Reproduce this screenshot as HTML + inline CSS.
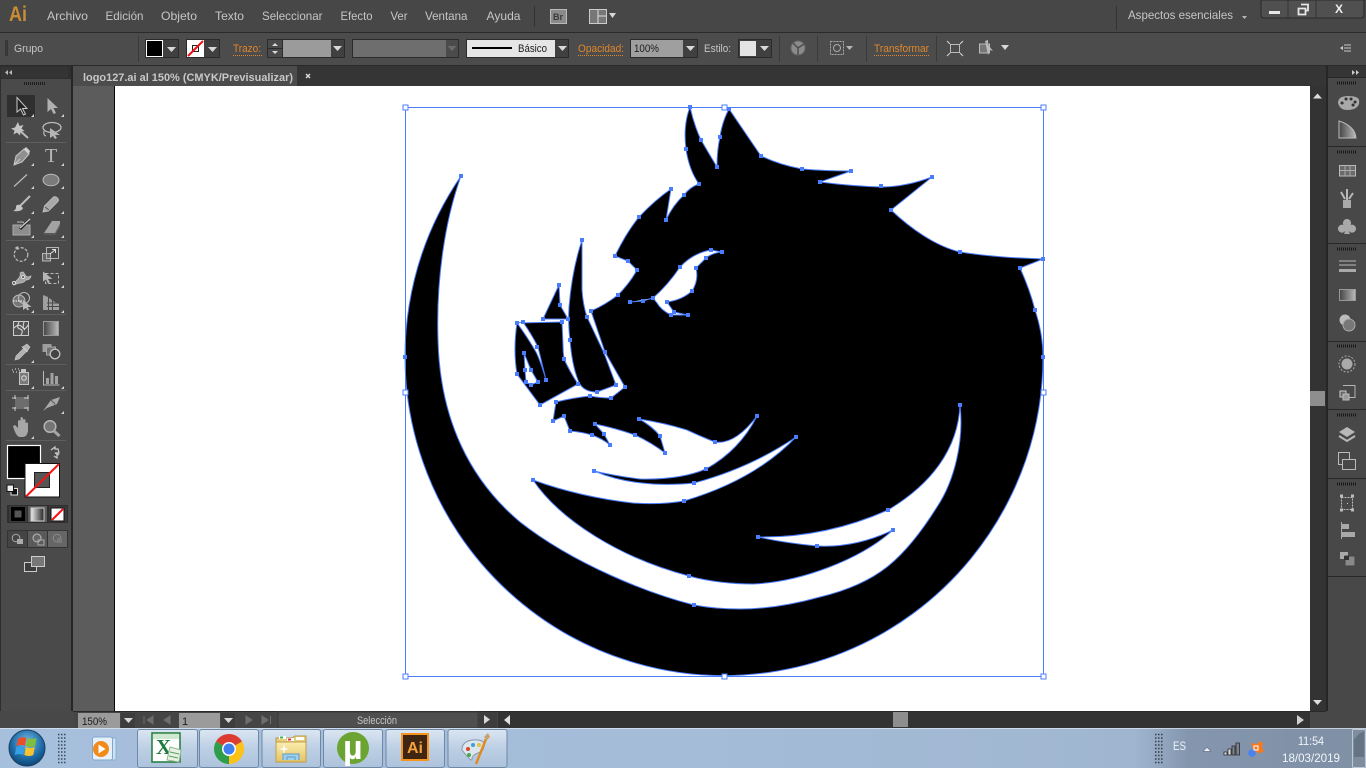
<!DOCTYPE html>
<html lang="es"><head><meta charset="utf-8"><title>Illustrator</title>
<style>html,body{margin:0;padding:0;background:#484848;overflow:hidden}svg{display:block}
text{font-family:"Liberation Sans",sans-serif;font-size:11px;fill:#c6c6c6}
.o{fill:#e0872d}.d{fill:#1c1c1c}
.g{fill:#b5b5b5}.l{fill:none;stroke:#b5b5b5;stroke-width:1.2}
.m{fill:#7c7c7c;stroke:#bcbcbc;stroke-width:1}
.t{fill:#d0d0d0}
.b{fill:#3c3c3c;stroke:#2a2a2a}
.w{fill:#d8d8d8}
</style></head><body>
<svg xmlns="http://www.w3.org/2000/svg" width="1366" height="768" viewBox="0 0 1366 768">
<defs>
<linearGradient id="tb" x1="0" x2="1" y1="0" y2="0"><stop offset="0" stop-color="#a6bfdc"/><stop offset=".5" stop-color="#a4bcd8"/><stop offset=".83" stop-color="#a0b6d0"/><stop offset=".87" stop-color="#8496ae"/><stop offset="1" stop-color="#7f8fa4"/></linearGradient>
<linearGradient id="btn" x1="0" x2="0" y1="0" y2="1"><stop offset="0" stop-color="#dbe6f2"/><stop offset=".5" stop-color="#bccfe4"/><stop offset="1" stop-color="#adc3dc"/></linearGradient>
<linearGradient id="gr" x1="0" x2="1" y1="0" y2="0"><stop offset="0" stop-color="#444"/><stop offset="1" stop-color="#bbb"/></linearGradient>
<linearGradient id="gw" x1="0" x2="1" y1="0" y2="0"><stop offset="0" stop-color="#eee"/><stop offset="1" stop-color="#222"/></linearGradient>
<radialGradient id="orb" cx=".5" cy=".35" r=".7"><stop offset="0" stop-color="#7fc0e8"/><stop offset=".6" stop-color="#1d6ca8"/><stop offset="1" stop-color="#0c3c68"/></radialGradient>
<linearGradient id="fold" x1="0" x2="0" y1="0" y2="1"><stop offset="0" stop-color="#fbeeb0"/><stop offset="1" stop-color="#e3c264"/></linearGradient>
</defs>

<!-- base -->
<rect width="1366" height="768" fill="#484848"/>
<!-- menu bar -->
<rect width="1366" height="32" fill="#474747"/>
<rect y="32" width="1366" height="1" fill="#2a2a2a"/>
<text x="9" y="21" textLength="18" lengthAdjust="spacingAndGlyphs" style="font-size:21px;font-weight:bold;fill:#c98d35">Ai</text>
<g style="font-size:12px">
<text x="47" y="20" textLength="41" lengthAdjust="spacingAndGlyphs" style="font-size:12px">Archivo</text>
<text x="105.500" y="20" textLength="38" lengthAdjust="spacingAndGlyphs" style="font-size:12px">Edición</text>
<text x="161" y="20" textLength="36" lengthAdjust="spacingAndGlyphs" style="font-size:12px">Objeto</text>
<text x="215" y="20" textLength="29" lengthAdjust="spacingAndGlyphs" style="font-size:12px">Texto</text>
<text x="262" y="20" textLength="60.500" lengthAdjust="spacingAndGlyphs" style="font-size:12px">Seleccionar</text>
<text x="340.500" y="20" textLength="32" lengthAdjust="spacingAndGlyphs" style="font-size:12px">Efecto</text>
<text x="390.500" y="20" textLength="17" lengthAdjust="spacingAndGlyphs" style="font-size:12px">Ver</text>
<text x="425" y="20" textLength="42.500" lengthAdjust="spacingAndGlyphs" style="font-size:12px">Ventana</text>
<text x="486.500" y="20" textLength="34" lengthAdjust="spacingAndGlyphs" style="font-size:12px">Ayuda</text>
</g>
<rect x="534" y="6" width="1" height="21" fill="#333"/>
<rect x="550.5" y="9.5" width="16" height="14" fill="#8a8a8a" stroke="#bbb"/><text x="553" y="20" style="font-size:9px;font-weight:bold;fill:#3a3a3a">Br</text>
<rect x="589.5" y="9.5" width="17" height="14" fill="#777" stroke="#ccc"/><path d="M598 10v13M598 16h8" stroke="#ddd" fill="none"/><path d="M609 13h7l-3.500 5z" class="w"/>
<rect x="1116" y="6" width="1" height="24" fill="#333"/>
<text x="1128" y="19" textLength="105" lengthAdjust="spacingAndGlyphs" style="font-size:12px">Aspectos esenciales</text><path d="M1242 16h5l-2.500 3z" class="g"/>
<!-- window buttons -->
<path d="M1261 0h103v15q0 3-3 3h-97q-3 0-3-3z" fill="#505050" stroke="#2a2a2a"/>
<path d="M1288 0v18M1316 0v18" stroke="#333"/>
<rect x="1269" y="11" width="11" height="3" fill="#e6e6e6"/>
<path d="M1298.500 8.500h7v6h-7zM1301 4.500h7v6h-2" fill="none" stroke="#e6e6e6" stroke-width="1.800"/>
<text x="1335" y="13" style="font-size:12px;font-weight:bold;fill:#eee">X</text>

<!-- control bar -->
<rect y="33" width="1366" height="32" fill="#4c4c4c"/>
<rect y="65" width="1366" height="1" fill="#2a2a2a"/>
<path d="M5 41h3M5 43h3M5 45h3M5 47h3M5 49h3M5 51h3M5 53h3M5 55h3" stroke="#222" fill="none"/>
<text x="14" y="52" textLength="29" lengthAdjust="spacingAndGlyphs">Grupo</text>
<rect x="138" y="36" width="1" height="26" fill="#3a3a3a"/>
<!-- fill swatch -->
<rect x="145.500" y="39.500" width="33" height="18" fill="#404040" stroke="#2b2b2b"/>
<rect x="146.500" y="40.500" width="16" height="16" fill="#000" stroke="#fff"/>
<path d="M167 47h9l-4.500 5z" class="w"/>
<rect x="186.500" y="39.500" width="33" height="18" fill="#404040" stroke="#2b2b2b"/>
<rect x="187" y="40" width="17" height="17" fill="#fff"/><rect x="192.500" y="45.500" width="6" height="6" fill="none" stroke="#222"/><path d="M188 56L203 41" stroke="#f01212" stroke-width="2"/>
<path d="M208 47h9l-4.500 5z" class="w"/>
<text x="233" y="52" class="o" textLength="28" lengthAdjust="spacingAndGlyphs">Trazo:</text><path d="M233 55.500h29" stroke="#e0872d" stroke-dasharray="1 1"/>
<rect x="267.500" y="39.500" width="77" height="18" fill="#9b9b9b" stroke="#2b2b2b"/>
<rect x="268" y="40" width="14" height="17" fill="#4a4a4a"/><path d="M268 48.500h14M282.500 40v17" stroke="#2b2b2b"/><path d="M272 46l3-3 3 3zM272 51l3 3 3-3z" class="w"/>
<rect x="331" y="40" width="13" height="17" fill="#404040"/><path d="M333 46h9l-4.500 5z" class="w"/>
<rect x="352.500" y="39.500" width="106" height="18" fill="#6e6e6e" stroke="#2b2b2b"/>
<rect x="446" y="40" width="12" height="17" fill="#4b4b4b"/><path d="M447.500 46h9l-4.500 5z" fill="#6b6b6b"/>
<rect x="466.500" y="39.500" width="102" height="18" fill="#404040" stroke="#2b2b2b"/>
<rect x="467" y="40" width="88" height="17" fill="#e6e6e6"/><rect x="472" y="47" width="40" height="2" fill="#000"/><text x="518" y="52" class="d" textLength="29" lengthAdjust="spacingAndGlyphs">Básico</text>
<path d="M558 46h9l-4.500 5z" class="w"/>
<text x="578" y="52" class="o" textLength="46" lengthAdjust="spacingAndGlyphs">Opacidad:</text><path d="M578 55.500h46" stroke="#e0872d" stroke-dasharray="1 1"/>
<rect x="630.500" y="39.500" width="67" height="18" fill="#9f9f9f" stroke="#2b2b2b"/><text x="634" y="52" class="d" textLength="25" lengthAdjust="spacingAndGlyphs">100%</text>
<rect x="683" y="40" width="14" height="17" fill="#404040"/><path d="M686 46h9l-4.500 5z" class="w"/>
<text x="704" y="52" textLength="27" lengthAdjust="spacingAndGlyphs">Estilo:</text>
<rect x="738.500" y="39.500" width="33" height="18" fill="#404040" stroke="#2b2b2b"/><rect x="740" y="41" width="16" height="15" fill="#e4e4e4"/><path d="M760 46h9l-4.500 5z" class="w"/>
<path d="M779.500 36v26M817.500 36v26M866.500 36v26M936.500 36v26" stroke="#3a3a3a"/>
<circle cx="798" cy="48" r="7" fill="#8b8b8b" stroke="#6a6a6a"/><path d="M798 48L793 43M798 48l6-4M798 48v7" stroke="#4e4e4e" stroke-width="1.500"/>
<rect x="830.500" y="41.500" width="13" height="13" fill="none" stroke="#aaa" stroke-dasharray="2 1"/><circle cx="837" cy="48" r="3.500" fill="none" stroke="#aaa"/><path d="M846 46h7l-3.500 4z" class="g"/>
<text x="874" y="52" class="o" textLength="55" lengthAdjust="spacingAndGlyphs">Transformar</text><path d="M874 55.500h55" stroke="#e0872d" stroke-dasharray="1 1"/>
<rect x="950.500" y="44.500" width="9" height="8" fill="none" stroke="#bbb"/><path d="M947 41l3 3M963 41l-3 3M947 56l3-3M963 56l-3-3" stroke="#ccc" stroke-width="1.200"/>
<rect x="979.500" y="44" width="10" height="9" fill="#777" stroke="#bbb"/><path d="M985 41l3-1v4M985 41l8 10-3-1-2 5z" fill="#bbb"/><path d="M1001 45h8l-4 5z" class="w"/>
<path d="M1344 45h7M1344 48h7M1344 51h7" stroke="#c8c8c8"/><path d="M1340 48l3-2v4z" class="t"/>

<!-- tab row -->
<rect y="66" width="1366" height="20" fill="#353535"/>
<rect x="69" y="66" width="228" height="20" fill="#4c4c4c"/>
<path d="M68.500 66v20" stroke="#2a2a2a"/>
<text x="83" y="81" textLength="210" lengthAdjust="spacingAndGlyphs" style="font-weight:bold;fill:#c8c8c8;font-size:11px">logo127.ai al 150% (CMYK/Previsualizar)</text>
<path d="M306 74l4 4M310 74l-4 4" stroke="#ddd" stroke-width="1.400"/>

<!-- left panel -->
<rect x="0" y="66" width="72" height="646" fill="#2f2f2f"/>
<rect x="1" y="67" width="67" height="11" fill="#343434"/>
<rect x="1" y="79" width="70" height="634" fill="#4a4a4a"/>
<rect x="71" y="66" width="2" height="646" fill="#262626"/>
<path d="M8 70v5l-3-2.500zM12 70v5l-3-2.500z" fill="#bbb"/>
<path d="M24 83.500h1M26 83.500h1M28 83.500h1M30 83.500h1M32 83.500h1M34 83.500h1M36 83.500h1M38 83.500h1M40 83.500h1M42 83.500h1M44 83.500h1" stroke="#1e1e1e" stroke-width="3"/>

<!-- pasteboard + artboard -->
<rect x="73" y="86" width="42" height="626" fill="#5c5c5c"/>
<rect x="114" y="86" width="2" height="626" fill="#000" opacity=".95"/>
<rect x="115" y="86" width="1195" height="626" fill="#fff"/>

<!-- logo -->
<path fill-rule="evenodd" fill="#000" stroke="#4a7dfc" stroke-width="1" d="M461,176A319,319 0 1 0 1043,357C1043,340 1040,325 1035,310Q1030,290 1020,268L1043,259C1010,258 985,256 960,252C935,246 910,228 891,210L932,177Q905,187 881,187Q850,186 820,182L851,171Q825,171 802,169Q780,165 761,156L729,109Q722,122 720,137Q717,150 717,167Q708,152 701,140Q694,125 690,107Q683,125 686,149Q689,170 699,184Q690,187 684,195Q673,205 666,220L671,189Q655,200 639,217Q626,233 615,256L628,261L637,270Q630,283 618,295Q605,305 591,311L605,352L625,387L611,398Q600,398 590,396Q572,398 556,402L553,421L564,416L570,431Q582,432 592,435Q603,439 610,445L604,434L595,424Q615,428 635,435Q652,443 665,453L660,436Q652,426 639,419Q665,423 687,430Q702,437 715,442Q735,445 757,416Q740,450 706,469Q680,480 640,479Q615,476 594,471Q620,482 653,484Q675,485 694,483Q750,468 796,437Q755,480 684,501Q660,505 633,503Q580,497 533,480C560,520 620,558 689,576C710,582 735,584 753,584C800,582 860,560 893,530Q855,548 817,546Q785,543 758,537Q825,538 888,510C930,485 958,450 960,405C964,440 955,480 937,507C922,531 906,552 887,567C868,582 845,591 820,597C795,604 768,609 740,609Q715,609 694,605C650,594 575,565 520,522C470,480 440,420 438,340C436,280 445,220 461,176Z"/>
<!-- eye -->
<path fill="#fff" stroke="#4a7dfc" d="M630,302L643,301L653,298Q668,285 680,267Q693,253 711,250L722,252Q712,253 706,258L696,268Q699,280 692,291Q682,300 667,302L674,312L688,315L671,315Q661,310 657,303L653,298"/>
<!-- tusk -->
<path fill="#000" stroke="#4a7dfc" d="M582,240Q572,270 569,307Q568,325 570,340Q572,365 578,380Q582,392 597,392L616,385L604,353L587,317Q583,305 582,290Z"/>
<!-- triangle -->
<path fill="#000" stroke="#4a7dfc" d="M559,285L543,319H568L560,305Z"/>
<!-- snout -->
<path fill="#000" stroke="#4a7dfc" d="M517,323L562,322L563,345Q563,352 564,359Q570,372 578,384L540,405L517,374Q513,350 517,323Z"/>
<path fill="#fff" stroke="#4a7dfc" d="M517,323L523,322Q532,335 538,347L546,380Q541,362 536,352Q528,338 517,323Z"/>
<path fill="#fff" stroke="#4a7dfc" d="M524,353L525,370L526,382L531,385L538,382L531,370Z"/>
<!-- bbox -->
<rect x="405.500" y="107.500" width="638" height="569" fill="none" stroke="#4a7dfc"/>
<g fill="#fff" stroke="#4a7dfc"><rect x="403" y="105" width="5" height="5"/><rect x="722" y="105" width="5" height="5"/><rect x="1041" y="105" width="5" height="5"/><rect x="403" y="390" width="5" height="5"/><rect x="1041" y="390" width="5" height="5"/><rect x="403" y="674" width="5" height="5"/><rect x="722" y="674" width="5" height="5"/><rect x="1041" y="674" width="5" height="5"/></g>
<!-- anchors -->
<path fill="none" stroke="#4a7dfc" stroke-width="4" stroke-linecap="square" d="M461,176h0M405,357h0M1043,357h0M1035,310h0M1020,268h0M1043,259h0M960,252h0M891,210h0M932,177h0M881,186h0M820,182h0M851,171h0M802,169h0M761,156h0M729,109h0M720,137h0M717,167h0M701,140h0M690,107h0M686,149h0M699,184h0M684,195h0M666,220h0M671,189h0M639,217h0M615,256h0M628,261h0M637,270h0M618,295h0M591,311h0M605,352h0M625,387h0M611,398h0M590,396h0M556,402h0M553,421h0M564,416h0M570,431h0M592,435h0M610,445h0M604,434h0M595,424h0M635,435h0M665,453h0M660,436h0M639,419h0M715,442h0M757,416h0M706,469h0M594,471h0M694,483h0M796,437h0M684,501h0M533,480h0M689,576h0M893,530h0M817,546h0M758,537h0M888,510h0M960,405h0M694,605h0M630,302h0M643,301h0M653,298h0M680,267h0M711,250h0M722,252h0M706,258h0M696,268h0M692,291h0M667,302h0M674,312h0M688,315h0M671,315h0M582,240h0M587,317h0M597,392h0M616,385h0M578,384h0M570,340h0M568,319h0M559,285h0M543,319h0M560,305h0M517,323h0M523,322h0M562,322h0M564,359h0M540,405h0M517,374h0M537,347h0M546,380h0M524,353h0M525,370h0M526,382h0M531,385h0M538,382h0M531,370h0"/>

<!-- tool panel -->
<rect x="7" y="95" width="28" height="22" fill="#2f2f2f"/>
<path d="M6 142.500h60M6 240.500h60M6 314.500h60M6 364.500h60M6 390.500h60M6 440.500h60" stroke="#5e5e5e"/>
<!-- selection -->
<path d="M17 97.500V112l3.500-3 3 6 2-1-3-5.500h4.500z" fill="#222" stroke="#c9c9c9"/>
<path d="M47.500 98V112l3.500-3 2.500 5 2.500-1-2.500-5H58z" fill="#b0b0b0"/>
<!-- wand -->
<path d="M18 129l10 9" stroke="#bbb" stroke-width="2"/><path d="M18 122l1.500 4 4-1-2 3.500 3 2.500-4 .5-.5 4-3-3-3.500 2 1-4-3.500-2 4-1z" fill="#c4c4c4"/>
<!-- lasso -->
<ellipse cx="52" cy="127.500" rx="9" ry="5" fill="none" stroke="#bbb" stroke-width="1.300"/><path d="M44 131q-1 4 2 5" class="l"/><path d="M50 128v10l3-2 2 3 2-1-2-3h5z" fill="#b5b5b5"/>
<!-- pen -->
<path d="M14 165l2-9 8-7 5 5-7 8zM14 165l6-6" fill="#8f8f8f" stroke="#c8c8c8"/><path d="M24 149l2-2 4 4-1 3z" fill="#d0d0d0"/>
<text x="45" y="162" style="font-family:'Liberation Serif',serif;font-size:20px;fill:#b8b8b8">T</text>
<!-- line -->
<path d="M14 186.500L27 174.500" stroke="#bbb" stroke-width="1.200"/>
<ellipse cx="51" cy="180" rx="8" ry="5.800" fill="#7b7b7b" stroke="#bbb"/>
<!-- brush -->
<path d="M20 206L30 196" stroke="#bbb" stroke-width="2"/><path d="M13 211q3-1 3-4t4-2l3 3q-1 4-10 3z" fill="#c4c4c4"/>
<!-- pencil -->
<path d="M43 212l1.500-6 9-9q2-1 4 1t0 4l-9 9z" fill="#a9a9a9" stroke="#c4c4c4" stroke-width=".800"/><path d="M45 207l4 3" stroke="#555"/>
<!-- blob -->
<path d="M13 225h17v10H13z" fill="#8d8d8d" stroke="#ababab"/><path d="M17 222h6l2 3" fill="none" stroke="#bbb"/><path d="M20 229l9-9" stroke="#222" stroke-width="3"/><path d="M20 228l10-9" stroke="#c8c8c8" stroke-width="1.500"/>
<!-- eraser -->
<path d="M44 233l6-9h10l-5 9zM50 224h10v-3H52z" fill="#a3a3a3"/><path d="M44 234h11l5-8" fill="none" stroke="#666"/>
<!-- rotate -->
<circle cx="21" cy="254.500" r="6.800" fill="none" stroke="#b5b5b5" stroke-width="1.300" stroke-dasharray="3 1.500"/><path d="M18 246l-3.500 2 4 2z" fill="#bbb"/>
<!-- scale -->
<rect x="42.500" y="253.500" width="8" height="7.500" fill="#666" stroke="#b5b5b5"/><rect x="46.500" y="247.500" width="12" height="11" fill="none" stroke="#b5b5b5"/><path d="M50 254l5-4M52 249.500h3.500v3.500" stroke="#ddd" fill="none"/>
<!-- warp -->
<path d="M14 285q1-3 4-6t2-6q3-2 4 0t3 4q2 0 4-1-1 4-5 4l-2 2-3 1q-3 0-7 2z" fill="#a2a2a2" stroke="#c8c8c8" stroke-width=".700"/><circle cx="14" cy="283" r="1.500" fill="#444" stroke="#ddd"/><circle cx="23" cy="277" r="1.500" fill="#444" stroke="#ddd"/>
<!-- free transform -->
<rect x="45.500" y="273.500" width="13" height="10" fill="none" stroke="#bbb" stroke-dasharray="3 2"/><path d="M43 271.500v10l3-2 2 4 2-1-2-3.500h4.500z" fill="#b5b5b5"/>
<!-- shape builder -->
<circle cx="19" cy="301" r="6" fill="#757575" stroke="#bbb"/><circle cx="24" cy="298" r="5.500" fill="none" stroke="#bbb"/><path d="M13 301h9" stroke="#fff" stroke-dasharray="1.500 1"/><path d="M23 300v10l3-2 1.500 2.500 1.500-1-1.500-2.500h4z" fill="#bbb"/>
<!-- perspective -->
<path d="M43 295l5 2v13h-5zM49 298l3 2v10h-3zM53 301l6 3v6h-6z" fill="#9f9f9f"/><path d="M47 303h12M47 306.500h12" stroke="#4a4a4a"/>
<!-- mesh -->
<rect x="13.500" y="321.500" width="15" height="14" fill="#555" stroke="#ccc"/><path d="M14 328q5-5 8-1t6-2M19 322q-3 6 1 7t1 6M24 322q-2 6 1 8" fill="none" stroke="#ddd"/>
<!-- gradient -->
<rect x="43.500" y="321.500" width="15" height="14" fill="url(#gr)" stroke="#999"/>
<!-- eyedropper -->
<path d="M15 360l1-4 8-8 3 3-8 8zM24 346l3-2 3 3-2 3-1 2-5-5z" fill="#b2b2b2" stroke="#ccc" stroke-width=".600"/>
<!-- blend -->
<rect x="42.500" y="344" width="9" height="8" fill="#9c9c9c"/><rect x="46.500" y="347" width="9" height="8" fill="#6f6f6f" stroke="#a8a8a8"/><circle cx="55" cy="354" r="4.800" fill="#444" stroke="#c0c0c0" stroke-width="1.300"/>
<!-- sprayer -->
<rect x="19.500" y="372.500" width="9" height="12" fill="#7a7a7a" stroke="#c4c4c4"/><circle cx="24" cy="378" r="2.300" fill="none" stroke="#ddd"/><path d="M12 370h1M15 369h1M18 369h1M13 372h1M16 372h1M19 371h1" stroke="#ccc" stroke-width="1.300"/><rect x="21" y="369" width="5" height="3" fill="#c4c4c4"/>
<!-- graph -->
<path d="M43.500 371v14h16" fill="none" stroke="#bbb"/><path d="M46 378h3v6h-3zM50.500 373h3v11h-3zM55 376h3v8h-3z" fill="#a2a2a2"/>
<!-- artboard -->
<rect x="15" y="397" width="14" height="12" fill="#6d6d6d"/><path d="M12 398h19M12 408h19M15 395v16M28 395v16" stroke="#c9c9c9" stroke-dasharray="4 8"/>
<!-- slice -->
<path d="M43 411l8-11 9-3-3 7-10 4z" fill="#a9a9a9"/><path d="M51 400l4 4" stroke="#555"/>
<!-- hand -->
<path d="M13 426l2-1 3 3v-7q1-2 2.500 0v-3q1-2 2.500 0v2q1-2 2.500 0v3q1-1 2.500 0v8q-1 6-5 6h-3q-4 0-7-11z" fill="#a6a6a6"/>
<!-- zoom -->
<circle cx="50" cy="426.500" r="5.800" fill="#757575" stroke="#b5b5b5" stroke-width="1.500"/><path d="M54 431l5.500 5" stroke="#a5a5a5" stroke-width="3"/>
<!-- flyout corners -->
<path d="M34 114v3h-3zM64 114v3h-3zM34 163v3h-3zM64 163v3h-3zM34 186v3h-3zM64 186v3h-3zM34 211v3h-3zM64 211v3h-3zM34 235v3h-3zM64 235v3h-3zM34 262v3h-3zM64 262v3h-3zM34 285v3h-3zM64 285v3h-3zM34 310v3h-3zM64 310v3h-3zM34 360v3h-3zM34 386v3h-3zM64 386v3h-3zM64 411v3h-3zM34 436v3h-3z" fill="#d2d2d2"/>
<!-- fill stroke -->
<rect x="7.500" y="445.500" width="33" height="33" fill="#000" stroke="#fff" stroke-width="1.200"/>
<rect x="25" y="463.500" width="34.500" height="33.500" fill="#fff" stroke="#111"/>
<rect x="34.500" y="472.500" width="15" height="15" fill="#555" stroke="#222"/>
<path d="M26 496.500L59 464" stroke="#f21515" stroke-width="2"/>
<path d="M51 450l4-3v2h3l1 4h-4l4 2M57 453v5l-3-2" fill="none" stroke="#ccc" stroke-width="1.200"/>
<rect x="11" y="488.500" width="6.500" height="6.500" fill="#111" stroke="#ddd"/><rect x="7" y="485" width="6.500" height="6.500" fill="#eee" stroke="#111"/>
<!-- modes -->
<rect x="7" y="505" width="61" height="18" fill="#2f2f2f"/>
<rect x="9" y="506" width="18" height="16" fill="#3a3a3a"/><rect x="11" y="507" width="14" height="14" fill="#000"/><rect x="14.500" y="510.500" width="7" height="7" fill="#555"/>
<rect x="28" y="506" width="19" height="16" fill="#5d5d5d"/><rect x="31" y="508" width="13" height="13" fill="url(#gw)" stroke="#ccc"/>
<rect x="49" y="506" width="18" height="16" fill="#3a3a3a"/><rect x="51" y="508" width="13" height="13" fill="#fff" stroke="#111"/><path d="M52 520L63 509" stroke="#f21515" stroke-width="2"/>
<rect x="7" y="530" width="61" height="18" fill="#333"/>
<rect x="8" y="531" width="19" height="16" fill="#444"/><rect x="28" y="531" width="19" height="16" fill="#5a5a5a"/><rect x="48" y="531" width="19" height="16" fill="#666"/>
<circle cx="16" cy="538" r="3.800" fill="none" stroke="#aaa"/><rect x="17" y="539" width="6" height="5" fill="#aaa"/>
<circle cx="37" cy="538" r="4" fill="#666" stroke="#bbb"/><rect x="38" y="540" width="6" height="5" fill="none" stroke="#aaa"/>
<circle cx="57" cy="538" r="3.800" fill="none" stroke="#8a8a8a"/><path d="M57 538h5v5h-5z" fill="#7a7a7a"/>
<rect x="24.500" y="562.500" width="12" height="9" fill="#3d3d3d" stroke="#ccc"/><rect x="31.500" y="556.500" width="13" height="10" fill="#777" stroke="#ccc"/>

<!-- right scrollbar -->
<rect x="1310" y="86" width="16" height="626" fill="#333"/>
<rect x="1326" y="66" width="2" height="646" fill="#262626"/>
<path d="M1313 98.500l4.500-5 4.500 5z" fill="#ddd"/><path d="M1313 700l4.500 5 4.500-5z" fill="#ddd"/>
<rect x="1310" y="391" width="15" height="15" fill="#8e8e8e"/>
<!-- right panel -->
<rect x="1328" y="66" width="38" height="646" fill="#484848"/>
<rect x="1328" y="66" width="38" height="11" fill="#353535"/>
<path d="M1356 70v5l3-2.500zM1352 70v5l3-2.500z" fill="#ccc"/>
<path d="M1328 146.500h38M1328 243.500h38M1328 341.500h38M1328 409.500h38M1328 478.500h38M1328 576.500h38M1328 77.500h38" stroke="#282828"/>
<path d="M1337 83h19M1337 152h19M1337 249h19M1337 346h19M1337 415h19M1337 484h19" stroke="#181818" stroke-width="3" stroke-dasharray="1 1"/>
<!-- palette -->
<path d="M1338 103q0-7 10-7t11 4-2 7-10 3-9-7z" fill="#a9a9a9"/><path d="M1342 103h.100M1346 99h.100M1351 99h.100M1355 102h.100M1353 105h.100" stroke="#333" stroke-width="3" stroke-linecap="round"/>
<!-- guide -->
<path d="M1339 121v17h17q-1-12-17-17z" fill="url(#gr)" stroke="#bbb"/>
<!-- swatches -->
<rect x="1339.500" y="165.500" width="16" height="10.500" fill="#6a6a6a" stroke="#bbb"/><path d="M1345 165v11M1350 165v11M1340 170.500h15" stroke="#aaa"/>
<!-- brushes -->
<rect x="1343" y="200" width="8" height="8" fill="#a9a9a9"/><path d="M1347 200v-11M1345 199l-4-7M1349 199l4-6" stroke="#b8b8b8" stroke-width="2"/>
<!-- club -->
<path d="M1347 219a4 4 0 0 1 3.500 6a4 4 0 1 1-2 5.500l1.500 3.500h-6l1.500-3.500a4 4 0 1 1-2-5.500a4 4 0 0 1 3.500-6z" fill="#a9a9a9"/>
<!-- stroke -->
<path d="M1339 261h17M1339 265h17" stroke="#b8b8b8"/><rect x="1339" y="269" width="17" height="3" fill="#a9a9a9"/>
<rect x="1339.500" y="289.500" width="16" height="11" fill="url(#gr)" stroke="#999"/>
<circle cx="1345" cy="320" r="5.500" fill="#bbb"/><circle cx="1349" cy="325" r="6" fill="#777" stroke="#aaa"/>
<circle cx="1347" cy="364" r="8" fill="none" stroke="#aaa" stroke-dasharray="2 1.500"/><circle cx="1347" cy="364" r="5.500" fill="#a9a9a9"/>
<path d="M1343 385.500h12v12h-8" fill="none" stroke="#b5b5b5"/><rect x="1340" y="391" width="6" height="6" fill="#666" stroke="#ccc"/><rect x="1343" y="394" width="6" height="6" fill="#999" stroke="#bbb"/>
<path d="M1347 427l8 5-8 5-8-5z" fill="#b8b8b8"/><path d="M1339 436l8 5 8-5" fill="none" stroke="#b8b8b8" stroke-width="2"/>
<rect x="1338.500" y="452.500" width="11" height="12" fill="none" stroke="#bbb"/><rect x="1342.500" y="459.500" width="13" height="10" fill="#484848" stroke="#bbb"/>
<rect x="1341.500" y="497.500" width="11" height="12" fill="none" stroke="#bbb" stroke-dasharray="2 1"/><path d="M1340 496h3M1351 496h3M1340 510h3M1351 510h3" stroke="#bbb" stroke-width="3"/><rect x="1347" y="503" width="1" height="1" fill="#ccc"/>
<path d="M1341.500 522v17" stroke="#aaa"/><rect x="1342" y="524" width="7" height="5" fill="#a9a9a9"/><rect x="1342" y="532" width="13" height="5" fill="#a9a9a9"/>
<rect x="1340" y="552" width="8" height="7" fill="#a9a9a9"/><rect x="1345" y="556" width="10" height="10" fill="#888" stroke="#444"/>
<rect x="1344" y="556" width="5" height="4" fill="#333"/>

<!-- status bar -->
<rect x="0" y="711" width="1366" height="17" fill="#484848"/>
<rect x="73" y="711" width="1253" height="1" fill="#2a2a2a"/>
<rect x="74" y="712" width="432" height="16" fill="#454545"/>
<rect x="78" y="713" width="42" height="15" fill="#9b9b9b"/><text x="82" y="725" class="d" textLength="25" lengthAdjust="spacingAndGlyphs">150%</text>
<rect x="121" y="713" width="14" height="15" fill="#3d3d3d"/><path d="M124 718h9l-4.500 5z" class="w"/>
<path d="M144 716v8M153 716l-6 4 6 4zM170 716v8l-6-4z" fill="#6e6e6e" stroke="#6e6e6e"/>
<rect x="179" y="713" width="41" height="15" fill="#9b9b9b"/><text x="182" y="725" class="d">1</text>
<rect x="221" y="713" width="14" height="15" fill="#3d3d3d"/><path d="M224 718h9l-4.500 5z" class="w"/>
<path d="M246 716v8l6-4zM262 716v8l6-4zM270.500 716v8" fill="#6e6e6e" stroke="#6e6e6e"/>
<rect x="278" y="712" width="200" height="16" fill="#4f4f4f" stroke="#3a3a3a"/><text x="357" y="724" textLength="40" lengthAdjust="spacingAndGlyphs">Selección</text>
<rect x="479" y="712" width="18" height="16" fill="#3d3d3d"/><path d="M484 715v9l6-4.500z" class="w"/>
<!-- hscroll -->
<rect x="498" y="712" width="812" height="16" fill="#333"/>
<path d="M510 715v10l-6-5z" fill="#e0e0e0"/>
<path d="M1297 715v10l7-5z" fill="#d0d0d0"/>
<rect x="893" y="712" width="15" height="15" fill="#8e8e8e"/>
<rect x="1310" y="712" width="16" height="16" fill="#484848"/>

<!-- taskbar -->
<rect y="728" width="1366" height="40" fill="url(#tb)"/>
<rect y="728" width="1366" height="1" fill="#dfe8f2" opacity=".7"/>
<circle cx="27" cy="748" r="18" fill="url(#orb)" stroke="#1b3f60"/>
<path d="M18 739q4-3 8.500-1l-1.500 8q-4-2-8.500 0z" fill="#e8502b"/><path d="M27.500 738q4 2 9 0l-1.500 8q-4 2-9 0z" fill="#7fbf3a"/><path d="M16.300 747q4-2 8.500 0l-1.500 8q-4-2-8.500 0z" fill="#35a0e6"/><path d="M25.800 747q4 2 9 0l-1.500 8q-4 2-9 0z" fill="#f6c32c"/>
<path d="M58 734.500h8M58 738h8M58 741.500h8M58 745h8M58 748.500h8M58 752h8M58 755.500h8M58 759h8M58 762.500h8" stroke="#3a4a5c" stroke-width="1.500" stroke-dasharray="1.500 1.500"/>
<!-- media player -->
<rect x="97" y="738" width="19" height="22" fill="#cfe0f0" stroke="#8ab0d4"/><rect x="92.500" y="737" width="20" height="23" rx="2" fill="#e6f0fa" stroke="#7fa8cc"/><circle cx="101" cy="749" r="8" fill="#f28a1a"/><path d="M98.500 744.500v9l7-4.500z" fill="#fff"/>
<!-- buttons -->
<g fill="url(#btn)" stroke="#6f88a6"><rect x="137.500" y="729.500" width="60" height="38" rx="2.500"/><rect x="199.500" y="729.500" width="59" height="38" rx="2.500"/><rect x="262" y="729.500" width="58.500" height="38" rx="2.500"/><rect x="323.500" y="729.500" width="59" height="38" rx="2.500"/><rect x="386" y="729.500" width="58.500" height="38" rx="2.500"/><rect x="448" y="729.500" width="59" height="38" rx="2.500"/></g>
<!-- excel -->
<rect x="152" y="733" width="28" height="29" fill="#fff" stroke="#1f7a38" stroke-width="1.500"/><rect x="153" y="734" width="26" height="5" fill="#cfe8cf"/>
<text x="156" y="754" style="font-size:21px;font-weight:bold;fill:#1e7a3c;font-family:'Liberation Serif',serif">X</text><path d="M170 747l11 3-2 12-12-2z" fill="#e8f2e4" stroke="#8fb78f"/><path d="M170 752l9 2M169 756l9 2" stroke="#5aa060"/>
<!-- chrome -->
<path d="M229 749L216 741.500A15 15 0 0 1 242 741.500Z" fill="#dc3d30"/><path d="M229 749L216 741.500A15 15 0 0 0 229 764Z" fill="#2f9e4c"/><path d="M229 749L242 741.500A15 15 0 0 1 229 764Z" fill="#fbc217"/>
<circle cx="229" cy="749" r="7" fill="#fff"/><circle cx="229" cy="749" r="5.500" fill="#3f7fee"/>
<!-- folder -->
<path d="M276 738h16l3-2h11v23h-30z" fill="#e8cf7c" stroke="#b89844"/><rect x="279" y="736" width="7" height="3" fill="#fff"/><rect x="280" y="736.500" width="3" height="2" fill="#3cb04c"/><rect x="287" y="738" width="7" height="3" fill="#fff"/><rect x="288" y="738.500" width="3" height="2" fill="#d33"/><rect x="296" y="737" width="8" height="3" fill="#fff"/>
<path d="M276 742h30v20h-30z" fill="url(#fold)" stroke="#c09e4a"/><path d="M283 760v-6h16v6M287 760v-3h8v3" fill="#9fd0ee" stroke="#5c9cc6"/><path d="M283 748l1-4 1 4 4 1-4 1-1 4-1-4-4-1z" fill="#fff"/>
<!-- utorrent -->
<circle cx="353" cy="748" r="16" fill="#6ba432"/><text x="343" y="759" style="font-size:34px;font-weight:bold;fill:#fff">µ</text>
<!-- ai -->
<rect x="402" y="734" width="26" height="26" fill="#3e2612" stroke="#f7941e" stroke-width="2"/><text x="407" y="753" style="font-size:16px;font-weight:bold;fill:#f6a23a">Ai</text>
<!-- paint -->
<path d="M462 750q0-9 11-10t11 5-6 8-6 6-10-9z" fill="#dbe6ee" stroke="#8898ac"/><circle cx="468" cy="749" r="2" fill="#d8442c"/><circle cx="473" cy="745" r="2" fill="#3fa0d8"/><circle cx="479" cy="745" r="2" fill="#e8c23c"/><circle cx="469" cy="755" r="2" fill="#4ca848"/>
<path d="M476 764l10-25" stroke="#e08a22" stroke-width="2.500"/><path d="M484 737l4-4 2 4-3 3z" fill="#c9a06a"/>
<!-- tray -->
<path d="M1155 734.500h8M1155 738h8M1155 741.500h8M1155 745h8M1155 748.500h8M1155 752h8M1155 755.500h8M1155 759h8M1155 762.500h8" stroke="#33404e" stroke-width="1.500" stroke-dasharray="1.500 1.500"/>
<text x="1173" y="750" textLength="13" lengthAdjust="spacingAndGlyphs" style="fill:#eef3f8;font-size:12px">ES</text>
<path d="M1203 751.500l4-4 4 4z" fill="#eef3f8" stroke="#404a60" stroke-width=".500"/>
<path d="M1224 752h3v3h-3zM1228 749h3v6h-3z" fill="#ddd" stroke="#2a2a2a" stroke-width=".800"/><path d="M1232 746h3v9h-3zM1236 743h3.500v12H1236z" fill="#7a838e" stroke="#2a2a2a" stroke-width=".800"/>
<path d="M1251 743l6 1 3-3 3 2-1 4 2 4-3 2-7-1z" fill="#f47a20"/><circle cx="1252" cy="753" r="3.800" fill="#4c82f0"/><rect x="1254" y="746" width="4" height="4" fill="none" stroke="#fff"/>
<text x="1298" y="745" textLength="26" lengthAdjust="spacingAndGlyphs" style="fill:#f2f5f9;font-size:12px">11:54</text>
<text x="1282" y="762" textLength="58" lengthAdjust="spacingAndGlyphs" style="fill:#f2f5f9;font-size:12px">18/03/2019</text>
<rect x="1352.500" y="729.500" width="13" height="38" rx="1" fill="#7e8e9e" stroke="#bcc8d6"/><path d="M1354 740q5-8 10-8v25h-10z" fill="#54626f" opacity=".6"/>
</svg>
</body></html>
